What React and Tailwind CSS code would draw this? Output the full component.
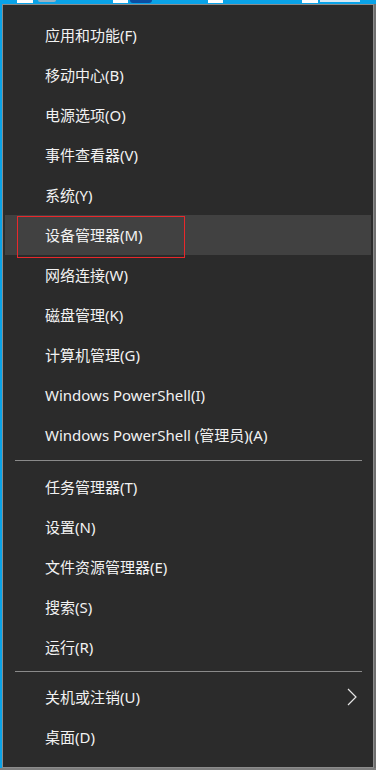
import React from 'react';

const GROUPS = [
  [
    '应用和功能(F)',
    '移动中心(B)',
    '电源选项(O)',
    '事件查看器(V)',
    '系统(Y)',
    '设备管理器(M)',
    '网络连接(W)',
    '磁盘管理(K)',
    '计算机管理(G)',
    'Windows PowerShell(I)',
    'Windows PowerShell (管理员)(A)',
  ],
  ['任务管理器(T)', '设置(N)', '文件资源管理器(E)', '搜索(S)', '运行(R)'],
  ['关机或注销(U)', '桌面(D)'],
];

const FONT = {
  fontFamily: '"Segoe UI", "Noto Sans", "Noto Sans CJK SC", sans-serif',
};

function Chevron() {
  return (
    <svg width="10" height="18" viewBox="0 0 10 18" className="text-[#e6e6e6]">
      <path d="M1 1 L9 9 L1 17" fill="none" stroke="currentColor" strokeWidth="1.2" />
    </svg>
  );
}

function Item({ label, active, submenu }) {
  return (
    <div
      className={`relative mx-[2px] h-[40px] flex items-center justify-between pl-[40px] pr-[14px] text-[15px] text-[#f2f2f2] ${active ? 'bg-[#414141]' : ''}`}
    >
      <span>{label}</span>
      {submenu && <Chevron />}
      {active && (
        <div className="absolute left-[12px] top-[1px] w-[168px] h-[42px] border border-[#e8282b]" />
      )}
    </div>
  );
}

function DesktopPeek() {
  // bits of the desktop icons showing above the menu
  return (
    <div className="h-[4px] flex items-start pl-[17px]">
      <div className="w-[16px] h-[3px] bg-white" />
      <div className="ml-[5px] w-[18px] h-[2px] rounded-b-full bg-[#9ab3c4]" />
      <div className="ml-[57px] w-[15px] h-[3px] bg-white" />
      <div className="ml-[2px] w-[22px] h-[3px] rounded-b-full bg-[#0b4ea2]" />
      <div className="ml-[56px] w-[15px] h-[3px] bg-white" />
      <div className="ml-[79px] w-[16px] h-[3px] bg-white" />
      <div className="ml-[2px] w-[40px] h-[2px] bg-[#d9eaf5]" />
    </div>
  );
}

export default function App() {
  return (
    <div className="w-[376px] h-[770px] overflow-hidden flex flex-col bg-[#0aa3e8]" style={FONT}>
      <DesktopPeek />
      <div className="flex">
        <div className="w-[2px]" />
        <div className="w-[372px] border border-[#8c8c8c] bg-[#2b2b2b] pt-[10px] pb-[10px]">
          {GROUPS.map((group, gi) => (
            <div key={gi}>
              {gi > 0 && (
                <div className={`flex flex-col ${gi === 1 ? 'h-[12px] pt-[5px]' : 'h-[10px] pt-[4px]'}`}>
                  <div className="ml-[12px] mr-[11px] h-px bg-[#8a8a8a]" />
                </div>
              )}
              {group.map((label) => (
                <Item
                  key={label}
                  label={label}
                  active={label === '设备管理器(M)'}
                  submenu={label === '关机或注销(U)'}
                />
              ))}
            </div>
          ))}
        </div>
        <div className="flex-1 bg-[#6f6f6f]" />
      </div>
      <div className="flex-1 bg-[#7d7d7d]" />
    </div>
  );
}
